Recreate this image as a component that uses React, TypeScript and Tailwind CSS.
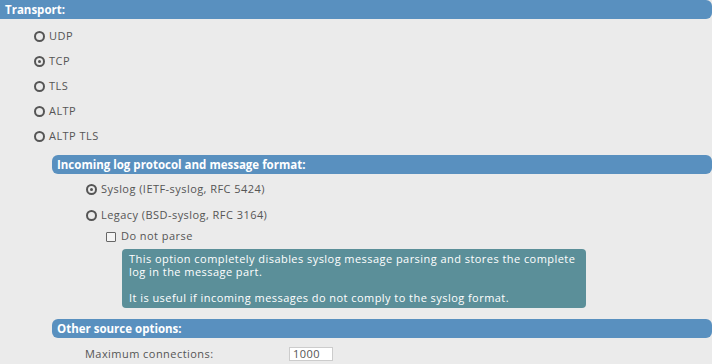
import React from 'react';

const transports = ['UDP', 'TCP', 'TLS', 'ALTP', 'ALTP TLS'];

function Radio({ checked }: { checked?: boolean }) {
  return (
    <span className="w-[11px] h-[11px] rounded-full border-2 border-[#555] flex items-center justify-center shrink-0">
      {checked && <span className="w-[3px] h-[3px] rounded-full bg-[#555]" />}
    </span>
  );
}

function Header({ title, className }: { title: string; className?: string }) {
  return (
    <div className={`h-[19px] bg-[#5990bf] rounded-[6px] flex items-center text-white font-bold text-[11.5px] tracking-normal ${className ?? ''}`}>
      {title}
    </div>
  );
}

export default function App() {
  return (
    <div
      className="w-[712px] h-[364px] overflow-hidden bg-[#ebebeb] text-[#555] text-[11px] tracking-[0.45px]"
      style={{ fontFamily: '"Open Sans", sans-serif' }}
    >
      <Header title="Transport:" className="pl-[5px] rounded-l-none rounded-tl-none" />

      <div className="pl-[34px] pt-[10px] flex flex-col gap-[10px]">
        {transports.map((t) => (
          <label key={t} className="h-[15px] flex items-center gap-[4px]">
            <Radio checked={t === 'TCP'} />
            <span>{t}</span>
          </label>
        ))}
      </div>

      <div className="pl-[52px] pt-[11px]">
        <Header title="Incoming log protocol and message format:" className="pl-[5px]" />

        <div className="pl-[34px] pt-[8px] flex flex-col gap-[11px]">
          <label className="h-[15px] flex items-center gap-[4px]">
            <Radio checked />
            <span>Syslog (IETF-syslog, RFC 5424)</span>
          </label>
          <label className="h-[15px] flex items-center gap-[4px]">
            <Radio />
            <span>Legacy (BSD-syslog, RFC 3164)</span>
          </label>
        </div>

        <div className="pl-[54px] pt-[6px]">
          <label className="h-[15px] flex items-center gap-[5px]">
            <span className="w-[10px] h-[10px] border border-[#666] rounded-[1px] bg-[#f4f4f4]" />
            <span>Do not parse</span>
          </label>
          <div className="ml-[16px] mt-[5px] w-[464px] h-[59px] bg-[#5b8f99] rounded-[4px] text-white px-[7px] pt-[3px] leading-[13px]">
            <p>This option completely disables syslog message parsing and stores the complete log in the message part.</p>
            <p className="mt-[13px]">It is useful if incoming messages do not comply to the syslog format.</p>
          </div>
        </div>

        <Header title="Other source options:" className="pl-[5px] mt-[11px]" />

        <div className="pl-[33px] pt-[8px] flex items-center">
          <span className="w-[204px]">Maximum connections:</span>
          <input
            defaultValue="1000"
            className="w-[44px] h-[14px] bg-white border border-[#ccc] text-[11px] px-[3px] text-[#555] outline-none"
          />
        </div>
      </div>
    </div>
  );
}
